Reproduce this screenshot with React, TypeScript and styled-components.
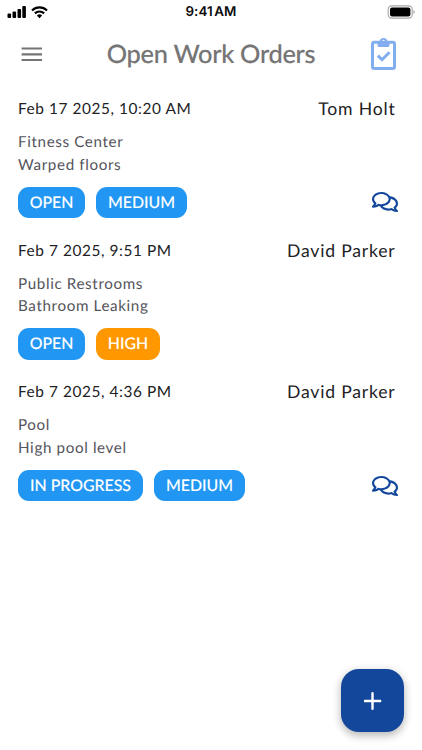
import React from "react";
import styled, { createGlobalStyle } from "styled-components";
import { FaRegComments } from "react-icons/fa";

const GlobalStyle = createGlobalStyle`
  * { box-sizing: border-box; }
  body {
    margin: 0;
    background: #fff;
    font-family: Lato, "Open Sans", sans-serif;
    text-rendering: geometricPrecision;
  }
`;

const Screen = styled.main`
  position: relative;
  width: 422px;
  height: 750px;
  overflow: hidden;
  background: #fff;
`;

const StatusBar = styled.div`
  display: grid;
  grid-template-columns: 1fr auto 1fr;
  align-items: center;
  height: 23px;
  padding: 0 7px 0 7px;
`;

const Signals = styled.div`
  display: flex;
  gap: 4px;
`;

const Clock = styled.time`
  font: 600 13.4px/24px Inter, sans-serif;
  letter-spacing: 0.1px;
  word-spacing: -2px;
  color: #0a0a0a;
`;

const Battery = styled.svg`
  justify-self: end;
`;

const Header = styled.header`
  display: flex;
  align-items: center;
  justify-content: space-between;
  height: 61px;
  padding: 0 25px 0 21px;
`;

const IconButton = styled.button`
  display: flex;
  padding: 0;
  border: 0;
  background: none;
`;

const Title = styled.h1`
  margin: 0 0 0 9px;
  font-size: 25.4px;
  font-weight: 500;
  line-height: 60px;
  letter-spacing: -0.3px;
  color: #757575;
  -webkit-text-stroke: 0.15px #757575;
  white-space: nowrap;
`;

const OrderList = styled.ul`
  margin: 0;
  padding: 12px 24px 0 18px;
  list-style: none;
`;

const Order = styled.li`
  height: 141.7px;
`;

const OrderTop = styled.div`
  display: flex;
  justify-content: space-between;
  height: 26px;
  padding-right: 2.5px;
  line-height: 26px;
  color: #212124;
`;

const DateText = styled.span`
  font-size: 15.4px;
  letter-spacing: 0.57px;
`;

const Person = styled.span`
  font-size: 17.6px;
  letter-spacing: 0.8px;
`;

const Details = styled.div`
  margin-top: 9px;
  font-size: 15.2px;
  line-height: 22.5px;
  letter-spacing: 0.63px;
  color: #54545b;
`;

const OrderBottom = styled.div`
  display: flex;
  align-items: center;
  justify-content: space-between;
  margin-top: 10.5px;
`;

const Tags = styled.div`
  display: flex;
  gap: 11px;
`;

const Tag = styled.span<{ $width: number; $high?: boolean }>`
  width: ${(p) => p.$width}px;
  height: 31.5px;
  border-radius: 11px;
  background: ${(p) => (p.$high ? "#ff9800" : "#2196f3")};
  color: #fff;
  font-size: 15.9px;
  font-weight: 500;
  line-height: 31.5px;
  -webkit-text-stroke: 0.1px #fff;
  text-align: center;
  white-space: nowrap;
`;

const Comments = styled(FaRegComments)`
  width: 26px;
  height: 24px;
  color: #12479b;
`;

const AddButton = styled.button`
  position: absolute;
  right: 18px;
  bottom: 18px;
  display: grid;
  place-items: center;
  width: 63px;
  height: 63px;
  padding: 0;
  border: 0;
  border-radius: 18px;
  background: #12479b;
  box-shadow: 0 4px 8px rgba(0, 0, 0, 0.22), 0 1px 10px rgba(0, 0, 0, 0.1);
`;

type TagData = { label: string; width: number; high?: boolean };
type OrderData = {
  date: string;
  person: string;
  place: string;
  issue: string;
  tags: TagData[];
  comments?: boolean;
};

const orders: OrderData[] = [
  {
    date: "Feb 17 2025, 10:20 AM",
    person: "Tom Holt",
    place: "Fitness Center",
    issue: "Warped floors",
    tags: [{ label: "OPEN", width: 67 }, { label: "MEDIUM", width: 91 }],
    comments: true,
  },
  {
    date: "Feb 7 2025, 9:51 PM",
    person: "David Parker",
    place: "Public Restrooms",
    issue: "Bathroom Leaking",
    tags: [{ label: "OPEN", width: 67 }, { label: "HIGH", width: 64, high: true }],
  },
  {
    date: "Feb 7 2025, 4:36 PM",
    person: "David Parker",
    place: "Pool",
    issue: "High pool level",
    tags: [{ label: "IN PROGRESS", width: 125 }, { label: "MEDIUM", width: 91 }],
    comments: true,
  },
];

export default function App() {
  return (
    <>
      <GlobalStyle />
      <Screen>
        <StatusBar>
          <Signals>
            <svg width="20" height="14" viewBox="0 0 20 14">
              <rect x="0.5" y="8.5" width="3.6" height="4.5" rx="1" />
              <rect x="5.5" y="6.5" width="3.6" height="6.5" rx="1" />
              <rect x="10.5" y="4" width="3.6" height="9" rx="1" />
              <rect x="15.3" y="1" width="3.6" height="12" rx="1" />
            </svg>
            <svg width="17" height="14" viewBox="0 0 17 14">
              <g fill="none" stroke="#000" strokeWidth="2.2">
                <path d="M1 5.500a10.600 10.600 0 0 1 15 0" />
                <path d="M3.900 8.400a6.500 6.500 0 0 1 9.200 0" />
              </g>
              <path d="M8.500 13.200 5.900 10.600a3.700 3.700 0 0 1 5.200 0Z" />
            </svg>
          </Signals>
          <Clock>9:41 AM</Clock>
          <Battery width="28" height="14" viewBox="0 0 28 14">
            <rect x="1.2" y="0.9" width="24" height="12.2" rx="3.6" fill="none" stroke="#a5a5a5" strokeWidth="1.1" />
            <rect x="3" y="2.6" width="20.4" height="8.8" rx="2" />
            <path d="M26.500 5v4c1.700-.7 1.700-3.300 0-4Z" fill="#a5a5a5" />
          </Battery>
        </StatusBar>
        <Header>
          <IconButton aria-label="Menu">
            <svg width="22" height="16" viewBox="0 0 22 16">
              <path d="M.6 2.500h20.400M.6 8.300h20.400M.6 14h20.400" stroke="#757575" strokeWidth="2.200" />
            </svg>
          </IconButton>
          <Title>Open Work Orders</Title>
          <IconButton aria-label="Work orders">
            <svg width="27" height="34" viewBox="0 0 27 34">
              <rect x="2.500" y="5.200" width="22" height="26.400" rx="1.800" fill="none" stroke="#82aeef" strokeWidth="3" />
              <path fillRule="evenodd" fill="#82aeef" d="M7.500 4H9.600a4 4 0 0 1 7.800 0h2.100v4.200a1.900 1.900 0 0 1-1.900 1.900H9.400a1.900 1.900 0 0 1-1.900-1.900Zm6-1.300a1.500 1.500 0 1 0 0 3 1.500 1.500 0 0 0 0-3Z" />
              <path d="m7.800 18.700 4.200 4 7.500-7.500" fill="none" stroke="#82aeef" strokeWidth="3" />
            </svg>
          </IconButton>
        </Header>
        <OrderList>
          {orders.map((order) => (
            <Order key={order.date}>
              <OrderTop>
                <DateText>{order.date}</DateText>
                <Person>{order.person}</Person>
              </OrderTop>
              <Details>
                <div>{order.place}</div>
                <div>{order.issue}</div>
              </Details>
              <OrderBottom>
                <Tags>
                  {order.tags.map((tag) => (
                    <Tag key={tag.label} $width={tag.width} $high={tag.high}>
                      {tag.label}
                    </Tag>
                  ))}
                </Tags>
                {order.comments && <Comments />}
              </OrderBottom>
            </Order>
          ))}
        </OrderList>
        <AddButton aria-label="Add work order">
          <svg width="18" height="18" viewBox="0 0 18 18">
            <path d="M8.500 1.200v15.600M.9 9h15.300" stroke="#fff" strokeWidth="2.400" strokeLinecap="round" />
          </svg>
        </AddButton>
      </Screen>
    </>
  );
}
